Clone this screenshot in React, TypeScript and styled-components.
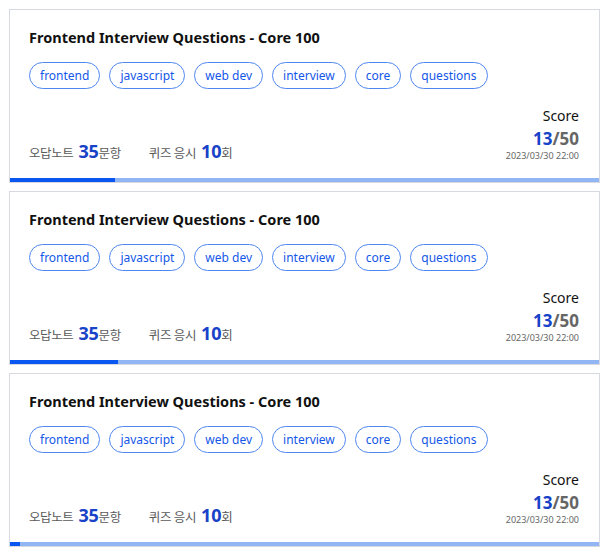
import React from "react";
import styled, { createGlobalStyle } from "styled-components";

const Global = createGlobalStyle`
  html, body { margin: 0; padding: 0; background: #ffffff; }
  body { font-family: "Noto Sans", "Noto Sans CJK KR", sans-serif; }
`;

const List = styled.div`
  display: flex;
  flex-direction: column;
  gap: 8px;
  padding: 9px 10px 0 9px;
`;

const Card = styled.section`
  display: flex;
  flex-direction: column;
  border: 1px solid #d6d9e1;
  background: #fff;
`;

const Body = styled.div`
  display: flex;
  flex-direction: column;
  padding: 17px 20px 16px 19px;
`;

const Title = styled.h2`
  margin: 0;
  font-size: 14.5px;
  line-height: 20px;
  font-weight: 700;
  color: #111;
`;

const Tags = styled.div`
  display: flex;
  gap: 9px;
  margin-top: 15px;
`;

const Tag = styled.span`
  display: inline-flex;
  align-items: center;
  height: 27px;
  box-sizing: border-box;
  padding: 0 10px;
  border: 1px solid #4f87f0;
  border-radius: 14px;
  font-size: 12px;
  color: #1457e8;
`;

const Footer = styled.div`
  display: flex;
  justify-content: space-between;
  align-items: flex-end;
  margin-top: 17px;
`;

const Stats = styled.div`
  display: flex;
  align-items: baseline;
  gap: 28px;
  margin-bottom: -1px;
`;

const Stat = styled.div`
  display: flex;
  align-items: baseline;
  font-size: 12.5px;
  color: #5a5a5a;
  letter-spacing: -0.4px;
`;

const StatNum = styled.strong`
  font-size: 18px;
  font-weight: 700;
  color: #1842c7;
  margin-left: 5px;
  letter-spacing: -0.2px;
`;

const ScoreBox = styled.div`
  display: flex;
  flex-direction: column;
  align-items: flex-end;
`;

const ScoreLabel = styled.div`
  font-size: 14px;
  line-height: 20px;
  color: #111;
`;

const ScoreValue = styled.div`
  margin-top: 2px;
  font-size: 17px;
  line-height: 22px;
  font-weight: 700;
  color: #666;
`;

const ScoreGot = styled.span`
  color: #1842c7;
`;

const DateText = styled.div`
  font-size: 9px;
  line-height: 12px;
  color: #666;
`;

const Track = styled.div`
  height: 4px;
  background: #92b6f3;
  display: flex;
`;

const Fill = styled.div`
  height: 100%;
  background: #0a56f0;
`;

const tags = ["frontend", "javascript", "web dev", "interview", "core", "questions"];

const items = [{ fill: 105 }, { fill: 108 }, { fill: 10 }];

export default function App() {
  return (
    <>
      <Global />
      <List>
        {items.map((it, i) => (
          <Card key={i}>
            <Body>
              <Title>Frontend Interview Questions - Core 100</Title>
              <Tags>
                {tags.map((t) => (
                  <Tag key={t}>{t}</Tag>
                ))}
              </Tags>
              <Footer>
                <Stats>
                  <Stat>
                    오답노트<StatNum>35</StatNum>문항
                  </Stat>
                  <Stat>
                    퀴즈 응시<StatNum>10</StatNum>회
                  </Stat>
                </Stats>
                <ScoreBox>
                  <ScoreLabel>Score</ScoreLabel>
                  <ScoreValue>
                    <ScoreGot>13</ScoreGot>/50
                  </ScoreValue>
                  <DateText>2023/03/30 22:00</DateText>
                </ScoreBox>
              </Footer>
            </Body>
            <Track>
              <Fill style={{ width: `${it.fill}px` }} />
            </Track>
          </Card>
        ))}
      </List>
    </>
  );
}
